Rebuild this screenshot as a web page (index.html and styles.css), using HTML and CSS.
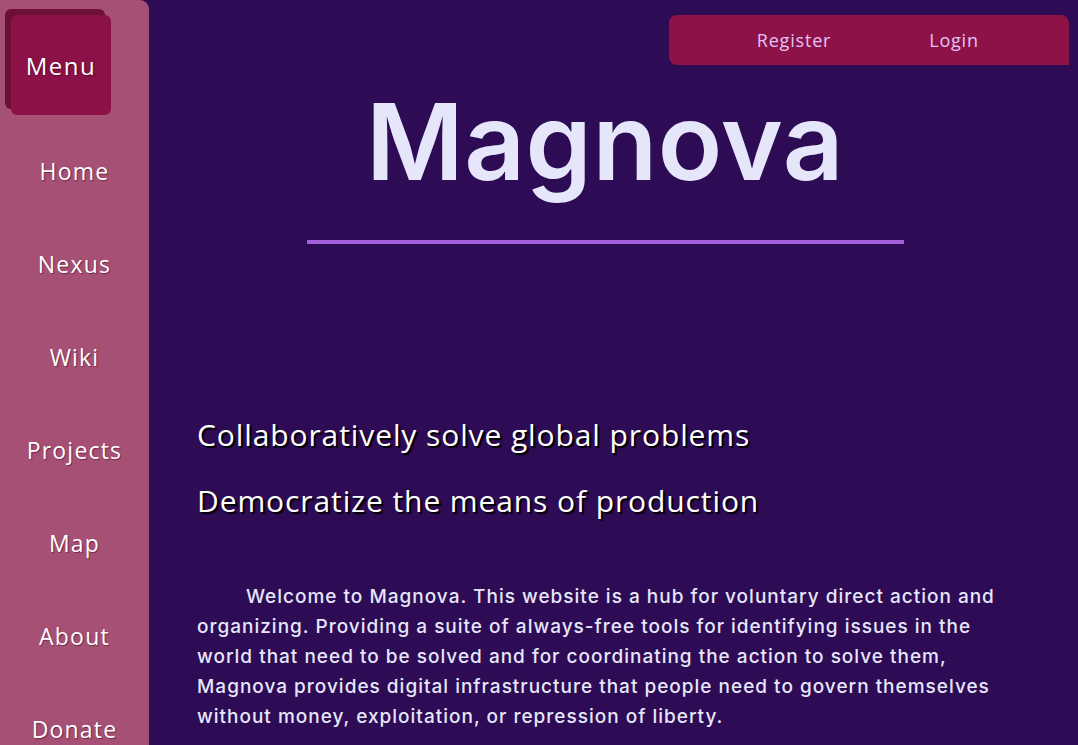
FILE: index.html
```html
<!DOCTYPE html>
<html lang="en">
<head>
<meta charset="utf-8">
<title>Magnova</title>
<link rel="stylesheet" href="styles.css">
</head>
<body>
<div class="layout">
  <aside class="sidebar">
    <div class="menu-wrap"><button class="menu-btn">Menu</button></div>
    <nav class="nav">
      <a class="nav-item" href="#">Home</a>
      <a class="nav-item" href="#">Nexus</a>
      <a class="nav-item" href="#">Wiki</a>
      <a class="nav-item" href="#">Projects</a>
      <a class="nav-item" href="#">Map</a>
      <a class="nav-item" href="#">About</a>
      <a class="nav-item" href="#">Donate</a>
    </nav>
  </aside>
  <main class="main">
    <div class="topbar">
      <a class="top-link" href="#">Register</a>
      <a class="top-link" href="#">Login</a>
    </div>
    <div class="content">
      <h1 class="title">Magnova</h1>
      <hr class="rule">
      <p class="tagline first">Collaboratively solve global problems</p>
      <p class="tagline">Democratize the means of production</p>
      <p class="intro">Welcome to Magnova. This website is a hub for voluntary direct action and organizing. Providing a suite of always-free tools for identifying issues in the world that need to be solved and for coordinating the action to solve them, Magnova provides digital infrastructure that people need to govern themselves without money, exploitation, or repression of liberty.</p>
    </div>
  </main>
</div>
</body>
</html>
```
FILE: styles.css
```css
* { box-sizing: border-box; }
html, body { margin: 0; padding: 0; }
body {
  background: #2d0b55;
  font-family: "Open Sans", "Liberation Sans", sans-serif;
  overflow: hidden;
}
.layout {
  display: flex;
  min-height: 900px;
}
.sidebar {
  width: 149px;
  flex: none;
  background: #a65075;
  border-top-right-radius: 9px;
  display: flex;
  flex-direction: column;
}
.menu-wrap {
  padding: 15px 0 0 11px;
}
.menu-btn {
  width: 100px;
  height: 100px;
  border: none;
  border-radius: 6px;
  background: #8c1148;
  box-shadow: -6px -6px 0 #6c1039;
  color: #fff;
  font-family: "Open Sans", sans-serif;
  font-size: 24px;
  letter-spacing: 1.5px;
  text-shadow: 1px 1px 2px rgba(0,0,0,0.4);
  padding: 0;
  cursor: pointer;
}
.nav {
  display: flex;
  flex-direction: column;
  padding-top: 9px;
}
.nav-item {
  height: 93px;
  display: flex;
  align-items: center;
  justify-content: center;
  color: #fff;
  text-decoration: none;
  font-family: "Open Sans", sans-serif;
  font-size: 23px;
  letter-spacing: 1.2px;
  text-shadow: 1px 1px 1px rgba(60,0,30,0.5);
}
.main {
  flex: 1;
  display: flex;
  flex-direction: column;
}
.topbar {
  align-self: flex-end;
  margin: 15px 9px 0 0;
  width: 400px;
  height: 50px;
  background: #8c1248;
  border-radius: 8px 8px 0 8px;
  display: grid;
  grid-template-columns: 160px 160px;
  padding-left: 45px;
  align-items: center;
}
.top-link {
  text-align: center;
  color: #e4c4f4;
  text-decoration: none;
  font-family: "Open Sans", sans-serif;
  font-size: 18px;
  letter-spacing: 0.8px;
}
.content {
  padding: 0 65px 0 48px;
}
.title {
  margin: 19px 0 0;
  text-align: center;
  font-family: Inter, sans-serif;
  font-weight: 600;
  font-size: 106px;
  line-height: 1.1;
  color: #e6e6fa;
  letter-spacing: 0.5px;
}
.rule {
  margin: 39px auto 0;
  width: 597px;
  height: 4px;
  border: none;
  background: #a25fd9;
}
.tagline {
  margin: 0;
  font-family: "Open Sans", sans-serif;
  font-size: 30px;
  line-height: 66px;
  letter-spacing: 0.9px;
  color: #fff;
  text-shadow: 2px 2px 1px #000;
}
.tagline.first {
  margin-top: 158px;
}
.intro {
  margin: 48px 0 0;
  text-indent: 49px;
  font-family: Inter, sans-serif;
  font-weight: 500;
  font-size: 19px;
  line-height: 30px;
  letter-spacing: 1px;
  color: #e6e6fa;
}
```
